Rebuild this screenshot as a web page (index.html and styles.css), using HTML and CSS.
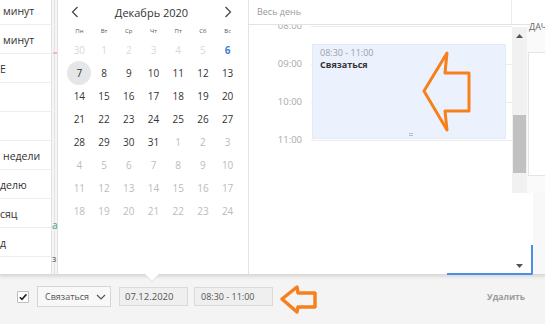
FILE: index.html
```html
<!DOCTYPE html>
<html lang="ru">
<head>
<meta charset="utf-8">
<link rel="stylesheet" href="styles.css">
</head>
<body>
<div class="page">
  <div class="popup">
    <div class="side">
      <div class="side-list">
        <div class="side-row pad">минут</div>
        <div class="side-row pad">минут</div>
        <div class="side-row">Е</div>
        <div class="side-row"></div>
        <div class="side-row"></div>
        <div class="side-row pad">недели</div>
        <div class="side-row">делю</div>
        <div class="side-row">сяц</div>
        <div class="side-row">д</div>
        <div class="side-row"></div>
      </div>
    </div>
    <div class="strip"><span class="mark-pink"></span><span class="mark-green">а</span><span class="mark-gray">з</span></div>
    <div class="cal">
      <div class="cal-head">
        <svg class="nav" width="8" height="12" viewBox="0 0 8 12"><path d="M6.5 1 L1.5 6 L6.5 11" fill="none" stroke="#444" stroke-width="1.2"/></svg>
        <span class="month">Декабрь 2020</span>
        <svg class="nav" width="8" height="12" viewBox="0 0 8 12"><path d="M1.5 1 L6.5 6 L1.5 11" fill="none" stroke="#444" stroke-width="1.2"/></svg>
      </div>
      <div class="cal-grid">
        <span class="wd">Пн</span><span class="wd">Вт</span><span class="wd">Ср</span><span class="wd">Чт</span><span class="wd">Пт</span><span class="wd">Сб</span><span class="wd">Вс</span>
        <span class="d past">30</span><span class="d past">1</span><span class="d past">2</span><span class="d past">3</span><span class="d past">4</span><span class="d past">5</span><span class="d today">6</span>
        <span class="d"><span class="sel">7</span></span><span class="d">8</span><span class="d">9</span><span class="d">10</span><span class="d">11</span><span class="d">12</span><span class="d">13</span>
        <span class="d">14</span><span class="d">15</span><span class="d">16</span><span class="d">17</span><span class="d">18</span><span class="d">19</span><span class="d">20</span>
        <span class="d">21</span><span class="d">22</span><span class="d">23</span><span class="d">24</span><span class="d">25</span><span class="d">26</span><span class="d">27</span>
        <span class="d">28</span><span class="d">29</span><span class="d">30</span><span class="d">31</span><span class="d off">1</span><span class="d off">2</span><span class="d off">3</span>
        <span class="d off">4</span><span class="d off">5</span><span class="d off">6</span><span class="d off">7</span><span class="d off">8</span><span class="d off">9</span><span class="d off">10</span>
        <span class="d off">11</span><span class="d off">12</span><span class="d off">13</span><span class="d off">14</span><span class="d off">15</span><span class="d off">16</span><span class="d off">17</span>
        <span class="d off">18</span><span class="d off">19</span><span class="d off">20</span><span class="d off">21</span><span class="d off">22</span><span class="d off">23</span><span class="d off">24</span>
      </div>
    </div>
    <div class="day">
      <div class="day-top">
        <div class="allday">Весь день</div>
        <div class="top-fill"></div>
      </div>
      <div class="day-mid">
        <div class="timeline">
          <div class="hours">
            <div class="hour"><span class="hlabel">08:00</span><span class="hgrid"></span></div>
            <div class="hour"><span class="hlabel">09:00</span><span class="hgrid"></span></div>
            <div class="hour"><span class="hlabel">10:00</span><span class="hgrid"></span></div>
            <div class="hour"><span class="hlabel">11:00</span><span class="hgrid"></span></div>
          </div>
          <div class="event">
            <div class="ev-time">08:30 - 11:00</div>
            <div class="ev-title">Связаться</div>
            <div class="ev-handle"></div>
            <svg class="big-arrow" width="60" height="92" viewBox="0 0 60 92"><polygon points="3,46 26,8 24,28 48,28 48,66 24,66 26,85" fill="none" stroke="#f7801c" stroke-width="3" stroke-linejoin="round"/></svg>
          </div>
        </div>
        <div class="scrollbar">
          <svg class="sb-up" width="7" height="4" viewBox="0 0 7 4"><polygon points="0,4 3.5,0 7,4" fill="#555"/></svg>
          <div class="sb-thumb"></div>
        </div>
        <div class="under">
          <div class="under-text">ДАЧ</div>
          <div class="under-box"></div>
        </div>
      </div>
      <div class="day-bot">
        <div class="lowbox">
          <div class="focus"></div>
          <svg class="sb-down" width="7" height="4" viewBox="0 0 7 4"><polygon points="0,0 3.5,4 7,0" fill="#555"/></svg>
        </div>
        <div class="bot-fill"></div>
      </div>
    </div>
  </div>
  <div class="toolbar">
    <span class="check"><svg width="10" height="10" viewBox="0 0 10 10"><path d="M1.8 5.2 L4 7.4 L8.4 2.4" fill="none" stroke="#222" stroke-width="1.6"/></svg></span>
    <span class="select">Связаться<svg width="10" height="6" viewBox="0 0 10 6"><path d="M1 1 L5 5 L9 1" fill="none" stroke="#555" stroke-width="1.2"/></svg></span>
    <span class="field date">07.12.2020</span>
    <span class="field time">08:30 - 11:00</span>
    <svg class="small-arrow" width="40" height="31" viewBox="0 0 40 31"><polygon points="3,15 18,3 19,9 36,9 36,23 19,23 18,28" fill="none" stroke="#f7801c" stroke-width="3.5" stroke-linejoin="round"/></svg>
    <span class="spacer"></span>
    <span class="delete">Удалить</span>
  </div>
</div>
</body>
</html>
```
FILE: styles.css
```css
* { box-sizing: border-box; margin: 0; padding: 0; }
body {
  width: 545px;
  height: 324px;
  overflow: hidden;
  font-family: "Open Sans", "Liberation Sans", sans-serif;
  background: #f4f4f4;
  color: #333;
}
.page { display: flex; flex-direction: column; height: 324px; }

.popup {
  display: flex;
  height: 275px;
  flex: none;
  background: #fff;
  border-bottom: 1px solid #d9d9d9;
  box-shadow: 0 2px 3px rgba(0,0,0,0.10);
  position: relative;
  z-index: 1;
}

/* left list */
.side { width: 52px; flex: none; border-right: 1px solid #e3e3e3; overflow: hidden; background: #fff; }
.side-list { margin-top: -4px; }
.side-row {
  height: 29px;
  border-bottom: 1px solid #eeeeee;
  font-size: 10.5px;
  line-height: 31px;
  white-space: nowrap;
  color: #333;
  overflow: hidden;
}
.side-row.pad { padding-left: 3px; }

.strip {
  width: 6px; flex: none; background: #f5f5f5; position: relative;
  border-right: 1px solid #e0e0e0;
}
.strip::before { content: ""; position: absolute; left: 2px; top: 0; bottom: 0; width: 1px; background: #e4e4e4; }
.mark-pink { position: absolute; left: 1px; top: 52px; width: 4px; height: 2px; background: #f2b7b7; }
.mark-green { position: absolute; left: 0; top: 218px; font-size: 10px; color: #3fa46a; line-height: 14px; }
.mark-gray { position: absolute; left: 0; top: 253px; font-size: 9px; color: #555; line-height: 12px; }

/* calendar */
.cal {
  width: 191px; flex: none; border-right: 1px solid #e3e3e3; padding: 0 8px 0 9px;
  position: relative; background: #fff;
}
.cal::after {
  content: ""; position: absolute; left: 87px; bottom: -7px;
  border-left: 7px solid transparent; border-right: 7px solid transparent; border-top: 7px solid #fff;
  filter: drop-shadow(0 1px 0 #dcdcdc);
}
.cal-head { height: 24px; display: flex; align-items: center; justify-content: space-between; padding: 0 8px 0 4px; }
.nav { display: block; }
.month { font-size: 11px; color: #333; }
.cal-grid {
  display: grid;
  grid-template-columns: repeat(7, 1fr);
  grid-template-rows: 14px repeat(8, 23px);
  justify-items: center;
  align-items: center;
}
.wd { font-size: 6px; color: #555; }
.d { font-size: 10px; color: #333; width: 24px; height: 23px; display: flex; align-items: center; justify-content: center; }
.d.past { color: #dadada; }
.d.off { color: #bcbcbc; }
.d.today { color: #3f7fd4; font-weight: 700; }
.sel { width: 24px; height: 24px; border-radius: 50%; background: #e5e6e8; display: flex; align-items: center; justify-content: center; }

/* day view */
.day { flex: 1; display: flex; flex-direction: column; background: #fff; }
.day-top { height: 25px; display: flex; flex: none; }
.allday {
  width: 263px; border-right: 1px solid #ececec; border-bottom: 1px solid #e3e3e3;
  font-size: 9px; color: #9a9a9a; padding-left: 8px; line-height: 24px;
}
.top-fill { flex: 1; border-bottom: 1px solid #e3e3e3; margin-right: 17px; }

.day-mid { height: 168px; display: flex; flex: none; }
.timeline { width: 263px; position: relative; overflow: hidden; background: #fff; }
.hours { margin-top: 1px; }
.hour { height: 38px; display: flex; }
.hlabel {
  width: 62px; text-align: right; padding-right: 9px; font-size: 9.5px; color: #a8a8a8;
  line-height: 12px; transform: translateY(-6px);
}
.hgrid { flex: 1; border-top: 1px solid #ececec; }
.event {
  position: absolute; left: 63px; top: 19px; width: 194px; height: 95px;
  background: #ebf2fd; border: 1px solid #e2eaf6; padding: 2px 0 0 7px;
}
.ev-time { font-size: 9px; color: #9aa0aa; line-height: 12px; }
.ev-title { font-size: 9px; font-weight: 700; color: #333; line-height: 12px; }
.ev-handle { position: absolute; left: 96px; bottom: 2px; width: 4px; height: 3px; border-top: 1px solid #b7bcc6; border-bottom: 1px solid #b7bcc6; }
.big-arrow { position: absolute; left: 108px; top: 0; }

.scrollbar { width: 15px; background: #f1f1f1; position: relative; margin-top: 2px; }
.sb-up { position: absolute; left: 4px; top: 7px; }
.sb-thumb { position: absolute; left: 1px; top: 88px; width: 13px; height: 58px; background: #c1c1c1; }

.under { flex: 1; background: #fafafa; position: relative; }
.under-text { font-size: 9px; color: #666; padding-left: 2px; line-height: 12px; margin-top: -4px; }
.under-box { position: absolute; left: 1px; right: 0; top: 27px; height: 124px; border-top: 1px solid #e4e4e4; border-left: 1px solid #e4e4e4; border-bottom: 1px solid #e4e4e4; background: #fff; }

.day-bot { flex: 1; display: flex; }
.lowbox { width: 284px; background: #fff; position: relative; }
.focus {
  position: absolute; right: 0; bottom: -1px; width: 86px; height: 30px;
  border-right: 2px solid #4b8fe6; border-bottom: 2px solid #4b8fe6; border-bottom-right-radius: 2px;
}
.sb-down { position: absolute; right: 10px; bottom: 6px; }
.bot-fill { flex: 1; background: #f8f8f8; }

/* toolbar */
.toolbar {
  flex: 1; display: flex; align-items: center; padding: 0 20px 6px 17px;
  background: #f4f4f4;
}
.check {
  width: 12px; height: 12px; border: 1px solid #bdbdbd; background: #fff; border-radius: 1px;
  display: flex; align-items: center; justify-content: center; margin-right: 8px;
}
.check svg { display: block; }
.select {
  width: 74px; height: 21px; border: 1px solid #d6d6d6; background: #f8f8f8;
  font-size: 9px; color: #555; display: flex; align-items: center; justify-content: space-between;
  padding: 0 4px 0 7px; margin-right: 8px;
}
.field {
  height: 19px; border: 1px solid #dadada; background: #efefef; font-size: 9.5px; color: #555;
  display: flex; align-items: center; padding-left: 5px;
}
.date { width: 69px; margin-right: 6px; }
.time { width: 79px; padding-left: 6px; font-size: 9px; }
.small-arrow { display: block; margin-left: 6px; margin-top: 6px; }
.spacer { flex: 1; }
.delete { font-size: 8.5px; font-weight: 700; color: #9b9b9b; }
```
